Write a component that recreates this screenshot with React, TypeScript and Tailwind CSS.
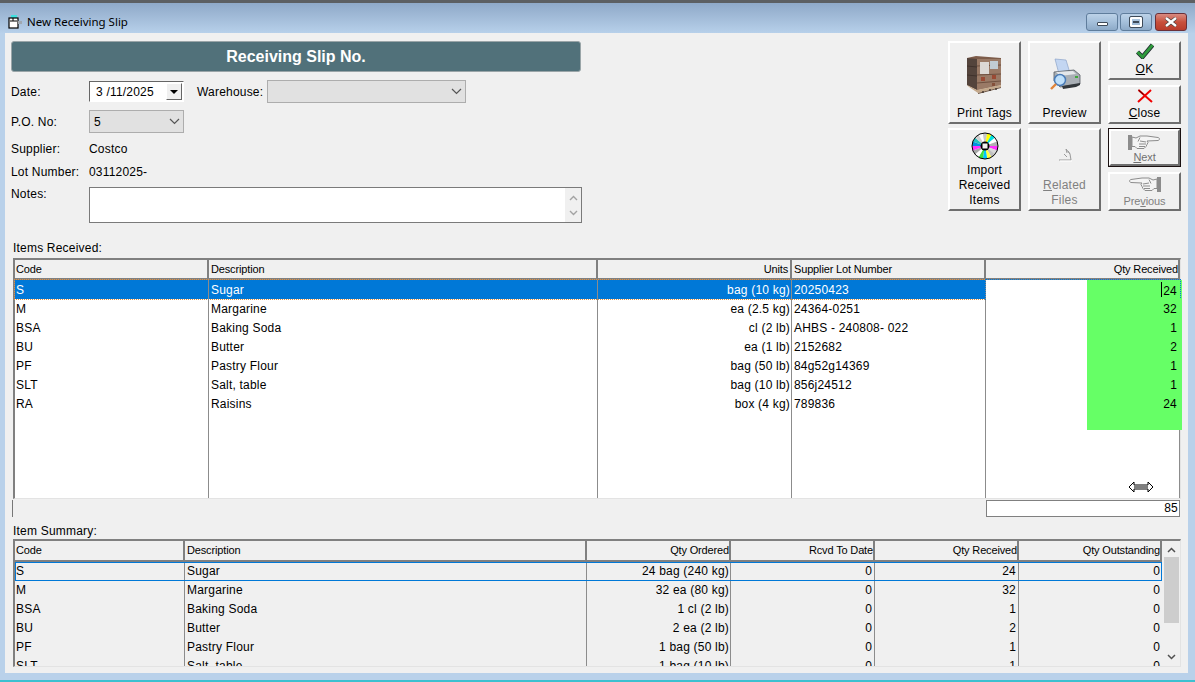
import React from 'react';

const received = [
  ['S', 'Sugar', 'bag (10 kg)', '20250423', '24'],
  ['M', 'Margarine', 'ea (2.5 kg)', '24364-0251', '32'],
  ['BSA', 'Baking Soda', 'cl (2 lb)', 'AHBS - 240808- 022', '1'],
  ['BU', 'Butter', 'ea (1 lb)', '2152682', '2'],
  ['PF', 'Pastry Flour', 'bag (50 lb)', '84g52g14369', '1'],
  ['SLT', 'Salt, table', 'bag (10 lb)', '856j24512', '1'],
  ['RA', 'Raisins', 'box (4 kg)', '789836', '24'],
];

const summary = [
  ['S', 'Sugar', '24 bag (240 kg)', '0', '24', '0'],
  ['M', 'Margarine', '32 ea (80 kg)', '0', '32', '0'],
  ['BSA', 'Baking Soda', '1 cl (2 lb)', '0', '1', '0'],
  ['BU', 'Butter', '2 ea (2 lb)', '0', '2', '0'],
  ['PF', 'Pastry Flour', '1 bag (50 lb)', '0', '1', '0'],
  ['SLT', 'Salt, table', '1 bag (10 lb)', '0', '1', '0'],
];

const Chevron = () => (
  <svg width="11" height="7" viewBox="0 0 11 7" fill="none" stroke="#555" strokeWidth="1.2">
    <path d="M1 1l4.5 4.5L10 1" />
  </svg>
);

const Pallet = () => (
  <svg width="36" height="40" viewBox="0 0 36 40" className="blur-[0.5px]">
    <path d="M1 3l9-2 25 2v27l-24 5-10-5z" fill="#7d5c4a" />
    <path d="M11 4l24 0v26l-24 5z" fill="#9a7a66" />
    <path d="M1 3l10 1v31l-10-5z" fill="#54443c" />
    <path d="M11 11l24-1M11 20l24-1M11 28l24-2" stroke="#6e5040" strokeWidth="1" />
    <path d="M1 11l10 1M1 20l10 1" stroke="#40322c" strokeWidth="1" />
    <rect x="14" y="7" width="9" height="12" fill="#dcd8d4" />
    <rect x="24" y="6" width="8" height="8" fill="#c0ccd2" />
    <rect x="15" y="22" width="4" height="4" fill="#9a4a34" />
    <rect x="26" y="20" width="4" height="4" fill="#9a4a34" />
    <rect x="26" y="28" width="3" height="3" fill="#84503a" />
    <path d="M3 32l9 6 23-6v-2l-24 5-10-5z" fill="#c4a98c" />
    <path d="M12 38l23-6v1l-23 6z" fill="#6d5442" />
    <path d="M17 36v2M24 34v2M30 33v2" stroke="#3c3028" strokeWidth="1.4" />
  </svg>
);

const Printer = () => (
  <svg width="32" height="33" viewBox="0 0 32 33">
    <path d="M6 1l11 1 4 13-11 1z" fill="#c3d6f2" stroke="#8da4c8" strokeWidth="0.7" />
    <path d="M5 14l20-2 6 5v9L11 29 5 23z" fill="#a9afb5" stroke="#565c62" strokeWidth="0.8" />
    <path d="M7 14l17-1 3 3-16 2z" fill="#e4e7ea" />
    <path d="M13 28l18-3v2l-4 2-13 2z" fill="#33383c" />
    <rect x="26" y="18" width="3" height="2" fill="#3fa83a" />
    <circle cx="11" cy="22" r="5.5" fill="#bfe0fb" stroke="#4a7cb8" strokeWidth="1.5" />
    <path d="M7 26l-5 5" stroke="#e0843a" strokeWidth="2.4" />
  </svg>
);

const cdColors = ['#ffffff', '#c8c8c8', '#ffff00', '#00e0e0', '#ffffff', '#b0b0b0', '#ff30ff', '#d8d8d8', '#c0c0c0', '#ffff40', '#00c8ff', '#40e040', '#ffffff', '#a8a8a8', '#ff30ff', '#0090e0', '#20c0c0', '#d0d0d0'];

const Disc = () => (
  <svg width="28" height="28" viewBox="-14 -14 28 28">
    {cdColors.map((c, i) => {
      const a = ((i - 6) * 20 * Math.PI) / 180;
      const b = ((i - 5) * 20 * Math.PI) / 180;
      return (
        <path
          key={i}
          d={`M0 0L${13 * Math.cos(a)} ${13 * Math.sin(a)}L${13 * Math.cos(b)} ${13 * Math.sin(b)}Z`}
          fill={c}
        />
      );
    })}
    <circle r="13" fill="none" stroke="#000" strokeWidth="1" />
    <circle r="4.5" fill="#000" />
    <rect x="-2.5" y="-2.5" width="5" height="5" fill="#f0f0f0" />
  </svg>
);

const Hand = ({ flip }: { flip?: boolean }) => (
  <svg width="33" height="18" viewBox="0 0 33 18" className={flip ? '-scale-x-100' : ''}>
    <rect x="0" y="1" width="4" height="15" fill="#8c8c8c" />
    <path
      d="M4 3l4 1 4-2h7l11 1.500c2 .5 2 2.500 0 3l-11 .5 1 1.500-1 2-1 2-2 2H9l-2-2H4z"
      fill="#f4f4f4"
      stroke="#8c8c8c"
      strokeWidth="1"
    />
    <path d="M12 7l6 1M11 10l7 0M11 12.500l6 0M12 3.500l-2 4" stroke="#8c8c8c" strokeWidth="1" fill="none" />
  </svg>
);

const Btn = ({ children, className = '' }: { children: React.ReactNode; className?: string }) => (
  <div
    className={`flex flex-col items-center justify-end border-2 border-t-white border-l-white border-r-[#6e6e6e] border-b-[#6e6e6e] bg-[#f0f0f0] pb-[1px] leading-[15px] text-center ${className}`}
  >
    {children}
  </div>
);

const WinBtn = ({ children, className }: { children: React.ReactNode; className: string }) => (
  <div className={`flex h-[18px] items-center justify-center rounded-[3px] border ${className}`}>{children}</div>
);

export default function App() {
  return (
    <div className="flex h-[682px] w-[1195px] flex-col overflow-hidden border-b-2 border-b-[#3cc0d0] bg-[#b9d1ea] font-['Liberation_Sans',Arial,sans-serif] text-[12px] tracking-[0.2px] text-black">
      {/* Title bar */}
      <div className="flex h-[33px] items-center border-t-[3px] border-t-[#5c5f62] bg-gradient-to-b from-[#8fa9c8] to-[#b7d0ea] pl-[7px] pr-[8px]">
        <svg width="16" height="16" viewBox="0 0 16 16" className="mt-[8px]">
          <path d="M4 1h6v3H4z" fill="#40e0e0" />
          <rect x="2" y="4" width="9" height="10" fill="#fff" stroke="#000" strokeWidth="1.2" />
          <path d="M3 7h7M6 4v3" stroke="#000" strokeWidth="1" />
          <path d="M11 7h4v3h-4z" fill="#a0a8b0" />
        </svg>
        <span className="ml-[4px] mt-[8px] font-['Noto_Sans',sans-serif] text-[11.5px] leading-none tracking-normal">New Receiving Slip</span>
        <div className="ml-auto mt-[7px] flex gap-[2px]">
          <WinBtn className="w-[32px] border-[#5f7d9c] bg-gradient-to-b from-[#bcd2e8] via-[#a5c0db] to-[#8daac8]">
            <div className="mt-[4px] h-[4px] w-[11px] rounded-[1px] border border-[#3e4a58] bg-white" />
          </WinBtn>
          <WinBtn className="w-[32px] border-[#5f7d9c] bg-gradient-to-b from-[#bcd2e8] via-[#a5c0db] to-[#8daac8]">
            <div className="flex h-[10px] w-[12px] items-center justify-center rounded-[1px] border-2 border-white outline outline-1 outline-[#3e4a58]">
              <div className="h-[2px] w-[6px] bg-[#3e4a58]" />
            </div>
          </WinBtn>
          <WinBtn className="ml-[1px] w-[32px] border-[#6a3038] bg-gradient-to-b from-[#d88a80] via-[#c8503c] to-[#b83c2c]">
            <svg width="14" height="10" viewBox="0 0 14 10">
              <path d="M2 1l10 8M12 1L2 9" stroke="#3e3e3e" strokeWidth="3.600" />
              <path d="M2 1l10 8M12 1L2 9" stroke="#fff" strokeWidth="2.400" />
            </svg>
          </WinBtn>
        </div>
      </div>

      {/* Client area */}
      <div className="ml-[5px] flex h-[640px] w-[1183px] flex-col bg-[#f0f0f0]">
        <div className="flex h-[208px] justify-between pl-[6px] pr-[7px] pt-[8px]">
          <div className="w-[571px]">
            <div className="flex h-[31px] w-[570px] items-center justify-center rounded-[3px] border border-[#9aa5a8] bg-[#51717a] text-[16px] font-bold tracking-normal text-white">
              Receiving Slip No.
            </div>
            <div className="mt-[8px] flex h-[23px] items-center">
              <span className="w-[78px]">Date:</span>
              <div className="flex h-[21px] w-[95px] items-center justify-between border border-t-[#666] border-l-[#666] border-r-white border-b-white bg-white pl-[6px] pr-[1px]">
                <span>3 /11/2025</span>
                <div className="flex h-[17px] w-[16px] items-center justify-center border border-t-white border-l-white border-r-[#666] border-b-[#666] bg-[#f0f0f0]">
                  <div className="h-0 w-0 border-x-[4px] border-t-[4px] border-x-transparent border-t-black" />
                </div>
              </div>
              <span className="ml-[13px] w-[70px]">Warehouse:</span>
              <div className="flex h-[23px] w-[199px] items-center justify-end border border-[#adadad] bg-[#e1e1e1] pr-[3px]">
                <Chevron />
              </div>
            </div>
            <div className="mt-[7px] flex h-[23px] items-center">
              <span className="w-[78px]">P.O. No:</span>
              <div className="flex h-[23px] w-[95px] items-center justify-between border border-[#adadad] bg-[#e1e1e1] pl-[4px] pr-[3px]">
                <span>5</span>
                <Chevron />
              </div>
            </div>
            <div className="mt-[7px] flex h-[18px] items-center">
              <span className="w-[78px]">Supplier:</span>
              <span>Costco</span>
            </div>
            <div className="mt-[5px] flex h-[18px] items-center">
              <span className="w-[78px]">Lot Number:</span>
              <span>03112025-</span>
            </div>
            <div className="mt-[6px] flex h-[36px]">
              <span className="w-[78px] leading-[14px]">Notes:</span>
              <div className="flex w-[493px] justify-end border border-[#7a7a7a] bg-white">
                <div className="flex w-[16px] flex-col items-center justify-around bg-[#f0f0f0] py-[2px]">
                  <svg width="9" height="6" viewBox="0 0 9 6" fill="none" stroke="#a3a3a3" strokeWidth="1.4"><path d="M1 5l3.500-3.500L8 5" /></svg>
                  <svg width="9" height="6" viewBox="0 0 9 6" fill="none" stroke="#a3a3a3" strokeWidth="1.4"><path d="M1 1l3.500 3.500L8 1" /></svg>
                </div>
              </div>
            </div>
          </div>

          <div className="grid h-[170px] grid-cols-[73px_73px_73px] grid-rows-[83px_83px] gap-x-[7px] gap-y-[4px]">
            <Btn>
              <div className="mb-[11px] mr-[2px]"><Pallet /></div>
              <span>Print Tags</span>
            </Btn>
            <Btn>
              <div className="mb-[15px]"><Printer /></div>
              <span>Preview</span>
            </Btn>
            <div className="flex flex-col gap-[5px]">
              <Btn className="h-[39px]">
                <svg width="18" height="16" viewBox="0 0 18 16" className="mb-[3px]">
                  <path d="M1.500 9l5 5L16.500 2" fill="none" stroke="#202830" strokeWidth="4.400" />
                  <path d="M1.500 9l5 5L16.500 2" fill="none" stroke="#2f9a3c" strokeWidth="2.800" />
                </svg>
                <span><u>O</u>K</span>
              </Btn>
              <Btn className="h-[39px]">
                <svg width="16" height="14" viewBox="0 0 16 14" className="mb-[3px]">
                  <path d="M1.500 1L15 13M14 1L1 13" stroke="#f00000" strokeWidth="2" fill="none" />
                  <path d="M1.500 1l5 4.500" stroke="#400000" strokeWidth="1" fill="none" />
                </svg>
                <span><u>C</u>lose</span>
              </Btn>
            </div>
            <Btn>
              <div className="mb-[3px]"><Disc /></div>
              <span>Import<br />Received<br />Items</span>
            </Btn>
            <Btn className="text-[#808080]">
              <svg width="16" height="16" viewBox="0 0 16 16" className="mb-[16px]" fill="none" stroke="#9a9a9a" strokeWidth="1">
                <path d="M2 14h12l-1-6-4-5M9 3l1 4M7 8l3 3M11 5l2 3" />
                <path d="M3 15h12" stroke="#fff" />
              </svg>
              <span><u>R</u>elated<br />Files</span>
            </Btn>
            <div className="flex flex-col gap-[5px]">
              <div className="h-[39px] border border-[#1a1010]">
                <Btn className="h-full !pb-0 text-[11px] tracking-[-0.1px] text-[#707070]">
                  <div className="mb-[-1px]"><Hand /></div>
                  <span className="leading-[13px]"><u>N</u>ext</span>
                </Btn>
              </div>
              <Btn className="h-[39px] text-[11px] tracking-[-0.1px] text-[#808080]">
                <div className="mb-[1px]"><Hand flip /></div>
                <span className="leading-[13px]">Pre<u>v</u>ious</span>
              </Btn>
            </div>
          </div>
        </div>

        <div className="pl-[8px] pr-[7px]">
          <div className="h-[17px] text-[12px] leading-[14px]">Items Received:</div>
          <div className="relative flex h-[241px] flex-col border-l-2 border-t-2 border-r border-b border-t-[#808080] border-l-[#808080] border-r-[#e3e3e3] border-b-[#e3e3e3]">
            <div className="grid h-[20px] grid-cols-[194px_389px_194px_194px_1fr] border-b-2 border-b-[#808080] text-[11px] leading-[18px] tracking-[-0.15px]">
              <div className="border-r-2 border-r-[#808080] pl-[1px]">Code</div>
              <div className="border-r-2 border-r-[#808080] pl-[2px]">Description</div>
              <div className="border-r-2 border-r-[#808080] pr-[2px] text-right">Units</div>
              <div className="border-r-2 border-r-[#808080] pl-[2px]">Supplier Lot Number</div>
              <div className="border-r-2 border-r-[#808080] pr-[0px] text-right">Qty Received</div>
            </div>
            <div className="flex flex-1 flex-col bg-white leading-[21px]">
              {received.map((r, i) => (
                <div
                  key={r[0]}
                  className={`grid h-[19px] grid-cols-[194px_389px_194px_194px_1fr] grid-rows-[19px] ${i === 0 ? 'bg-[#0078d7] text-white outline outline-1 outline-dotted outline-[#e09040]' : ''}`}
                >
                  <div className="border-r border-r-[#8c8c8c] pl-[1px]">{r[0]}</div>
                  <div className="border-r border-r-[#8c8c8c] pl-[2px]">{r[1]}</div>
                  <div className="border-r border-r-[#8c8c8c] pr-[1px] text-right">{r[2]}</div>
                  <div className="border-r border-r-[#8c8c8c] pl-[2px]">{r[3]}</div>
                  <div className={`relative border-r border-r-[#8c8c8c] bg-white pl-[101px] text-black ${i === 0 ? 'outline outline-1 outline-dotted outline-[#0078d7]' : ''}`}>
                    <div className="-mr-[3px] h-[19px] bg-[#66ff66] pr-[5px] text-right">
                      {i === 0 && <span className="mr-[1px] inline-block h-[15px] w-px translate-y-[2px] bg-black" />}
                      {r[4]}
                    </div>
                  </div>
                </div>
              ))}
              <div className="grid min-h-0 flex-1 grid-cols-[194px_389px_194px_194px_1fr]">
                <div className="border-r border-r-[#8c8c8c]" />
                <div className="border-r border-r-[#8c8c8c]" />
                <div className="border-r border-r-[#8c8c8c]" />
                <div className="border-r border-r-[#8c8c8c]" />
                <div className="border-r border-r-[#8c8c8c] pl-[101px]">
                  <div className="-mr-[3px] h-[17px] bg-[#66ff66]" />
                </div>
              </div>
            </div>
            {/* mouse pointer over the grid */}
            <svg width="26" height="12" viewBox="0 0 26 12" className="absolute left-[1113px] top-[221px]">
              <path d="M1 6l5-5v3h14V1l5 5-5 5V8H6v3z" fill="#fff" stroke="#000" strokeWidth="1" />
              <path d="M6 6h14" stroke="#000" strokeWidth="1" />
            </svg>
          </div>

          <div className="mt-[1px] flex h-[17px] justify-between">
            <div className="ml-[-1px] w-px bg-[#777]" />
            <div className="mr-[1px] h-[17px] w-[194px] border border-[#808080] bg-white pr-[1px] text-right leading-[15px]">85</div>
          </div>

          <div className="mt-[7px] h-[15px] leading-[14px]">Item Summary:</div>
          <div className="flex h-[128px] border-l-2 border-t-2 border-r border-b border-t-[#808080] border-l-[#808080] border-r-[#e3e3e3] border-b-[#e3e3e3]">
            <div className="flex min-w-0 flex-1 flex-col overflow-hidden">
              <div className="grid h-[21px] shrink-0 grid-cols-[170px_402px_144px_144px_144px_1fr] border-b-2 border-b-[#808080] text-[11px] leading-[18px] tracking-[-0.15px]">
                <div className="border-r-2 border-r-[#808080] pl-[1px]">Code</div>
                <div className="border-r-2 border-r-[#808080] pl-[2px]">Description</div>
                <div className="border-r-2 border-r-[#808080] text-right">Qty Ordered</div>
                <div className="border-r-2 border-r-[#808080] text-right">Rcvd To Date</div>
                <div className="border-r-2 border-r-[#808080] text-right">Qty Received</div>
                <div className="border-r-2 border-r-[#808080] text-right">Qty Outstanding</div>
              </div>
              <div className="min-h-0 flex-1 overflow-hidden leading-[19px]">
                {summary.map((r, i) => (
                  <div
                    key={r[0]}
                    className={`grid h-[19px] grid-cols-[170px_402px_144px_144px_144px_1fr] ${i === 0 ? 'outline outline-1 -outline-offset-1 outline-[#0078d7]' : ''}`}
                  >
                    <div className="border-r border-r-[#8c8c8c] pl-[1px]">{r[0]}</div>
                    <div className="border-r border-r-[#8c8c8c] pl-[2px]">{r[1]}</div>
                    <div className="border-r border-r-[#8c8c8c] pr-[1px] text-right">{r[2]}</div>
                    <div className="border-r border-r-[#8c8c8c] pr-[2px] text-right">{r[3]}</div>
                    <div className="border-r border-r-[#8c8c8c] pr-[2px] text-right">{r[4]}</div>
                    <div className="pr-[2px] text-right">{r[5]}</div>
                  </div>
                ))}
              </div>
            </div>
            <div className="ml-[1px] flex w-[17px] flex-col items-center bg-[#f0f0f0]">
              <svg width="9" height="6" viewBox="0 0 9 6" fill="none" stroke="#505050" strokeWidth="1.500" className="mb-[4px] mt-[6px]"><path d="M1 5l3.500-3.500L8 5" /></svg>
              <div className="h-[66px] w-[15px] bg-[#cdcdcd]" />
              <svg width="9" height="6" viewBox="0 0 9 6" fill="none" stroke="#505050" strokeWidth="1.500" className="mt-[31px]"><path d="M1 1l3.500 3.500L8 1" /></svg>
            </div>
          </div>
        </div>
      </div>
    </div>
  );
}
